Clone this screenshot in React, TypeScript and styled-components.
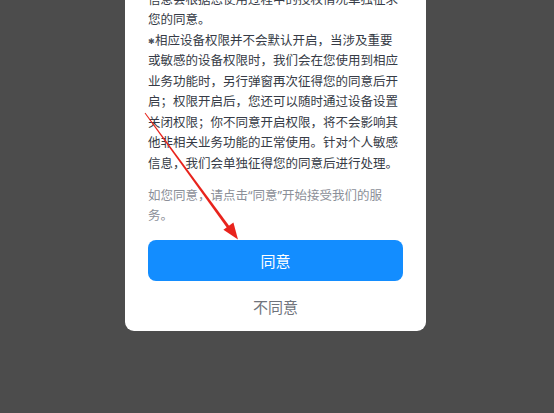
import React from "react";
import styled, { createGlobalStyle } from "styled-components";

const Global = createGlobalStyle`
  html, body { margin: 0; padding: 0; }
  body {
    width: 554px;
    height: 413px;
    overflow: hidden;
    background: #4c4c4c;
    font-family: "Noto Sans CJK SC", "Noto Sans", sans-serif;
  }
`;

const Page = styled.div`
  position: relative;
  width: 554px;
  height: 413px;
  overflow: hidden;
  background: #4c4c4c;
  display: flex;
  justify-content: center;
  align-items: flex-start;
`;

const Card = styled.div`
  width: 301px;
  box-sizing: border-box;
  margin-top: -11.25px;
  margin-right: 3px;
  padding: 0 23px 13px;
  background: #ffffff;
  border-radius: 0 0 9px 9px;
  display: flex;
  flex-direction: column;
`;

const Text = styled.div<{ $muted?: boolean }>`
  font-size: 12.5px;
  line-height: ${(p) => (p.$muted ? "20px" : "20.5px")};
  color: ${(p) => (p.$muted ? "#8b8f98" : "#363b46")};
  margin-top: ${(p) => (p.$muted ? "11.5px" : "0")};
  white-space: nowrap;
`;

const Line = styled.span`
  display: block;
  height: inherit;
`;

const Star = styled.span`
  font-family: "DejaVu Sans", sans-serif;
  font-size: 8px;
  line-height: 0;
  display: inline-block;
  width: 7px;
  vertical-align: 1px;
  color: #4a4f5a;
`;

const Quote = styled.span`
  font-family: "Noto Sans", sans-serif;
  line-height: 0;
`;

const AgreeButton = styled.button`
  margin-top: 15px;
  height: 41px;
  border: none;
  border-radius: 8px;
  background: #138dff;
  color: #ffffff;
  font-family: inherit;
  font-size: 15px;
  padding: 0;
`;

const Decline = styled.div`
  margin-top: 15px;
  height: 22px;
  line-height: 22px;
  text-align: center;
  font-size: 15px;
  color: #70747c;
`;

const Overlay = styled.svg`
  position: absolute;
  left: 0;
  top: 0;
  width: 554px;
  height: 413px;
  pointer-events: none;
`;

const mainLines = [
  "信息会根据您使用过程中的授权情况单独征求",
  "您的同意。",
  null,
  "或敏感的设备权限时，我们会在您使用到相应",
  "业务功能时，另行弹窗再次征得您的同意后开",
  "启；权限开启后，您还可以随时通过设备设置",
  "关闭权限；你不同意开启权限，将不会影响其",
  "他非相关业务功能的正常使用。针对个人敏感",
  "信息，我们会单独征得您的同意后进行处理。",
];

export default function App() {
  return (
    <>
      <Global />
      <Page>
        <Card>
          <Text>
            {mainLines.map((l, i) =>
              l === null ? (
                <Line key={i}>
                  <Star>✱</Star>相应设备权限并不会默认开启，当涉及重要
                </Line>
              ) : (
                <Line key={i}>{l}</Line>
              )
            )}
          </Text>
          <Text $muted>
            <Line>
              如您同意，请点击<Quote>“</Quote>同意<Quote>”</Quote>开始接受我们的服
            </Line>
            <Line>务。</Line>
          </Text>
          <AgreeButton>同意</AgreeButton>
          <Decline>不同意</Decline>
        </Card>
        <Overlay viewBox="0 0 554 413">
          <polygon points="144.6,113.3 145.4,112.7 230.2,227.2 227.8,229" fill="#e8231c" />
          <polygon points="238,239.5 223.4,229.8 233.4,222.4" fill="#e8231c" />
        </Overlay>
      </Page>
    </>
  );
}
